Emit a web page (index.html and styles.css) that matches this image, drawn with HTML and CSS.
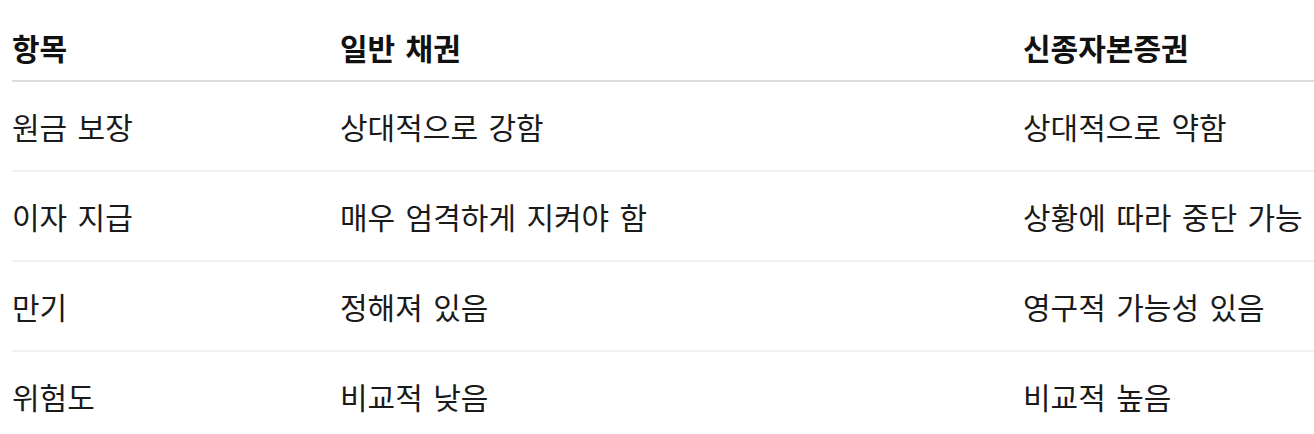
FILE: index.html
```html
<!DOCTYPE html>
<html lang="ko">
<head>
<meta charset="utf-8">
<link rel="stylesheet" href="styles.css">
</head>
<body>
<table class="compare">
  <colgroup>
    <col class="c1">
    <col class="c2">
    <col class="c3">
  </colgroup>
  <thead>
    <tr><th>항목</th><th>일반 채권</th><th>신종자본증권</th></tr>
  </thead>
  <tbody>
    <tr><td>원금 보장</td><td>상대적으로 강함</td><td>상대적으로 약함</td></tr>
    <tr><td>이자 지급</td><td>매우 엄격하게 지켜야 함</td><td>상황에 따라 중단 가능</td></tr>
    <tr><td>만기</td><td>정해져 있음</td><td>영구적 가능성 있음</td></tr>
    <tr><td>위험도</td><td>비교적 낮음</td><td>비교적 높음</td></tr>
  </tbody>
</table>
</body>
</html>
```
FILE: styles.css
```css
html, body {
  margin: 0;
  padding: 0;
  background: #fff;
}
body {
  font-family: "Noto Sans CJK KR", "Noto Sans", sans-serif;
  color: #1a1a1a;
  overflow: hidden;
}
.compare {
  margin: 15px 0 0 12px;
  width: calc(100% - 12px);
  border-collapse: collapse;
  table-layout: fixed;
  font-size: 30px;
  line-height: 40px;
  word-spacing: 2px;
}
.c1 { width: 328px; }
.c2 { width: 683px; }
.compare th,
.compare td {
  text-align: left;
  padding: 24px 0;
  white-space: nowrap;
  vertical-align: middle;
}
.compare th {
  font-weight: 700;
  color: #111;
  padding: 12px 0 13px;
  border-bottom: 2px solid #dddddd;
}
.compare td {
  font-weight: 400;
  border-bottom: 2px solid #f0f0f0;
}
```
